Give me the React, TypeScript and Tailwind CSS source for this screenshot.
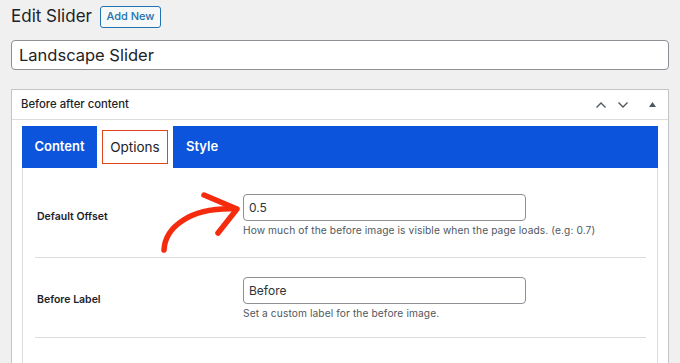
import React from 'react';

const font = { fontFamily: 'Inter, "Open Sans", sans-serif' };

function Row({
  label,
  value,
  help,
  first = false,
}: {
  label: string;
  value: string;
  help: string;
  first?: boolean;
}) {
  return (
    <div
      className={`flex items-center border-b border-[#dcdcde] ${first ? 'pt-[26px] pb-[20px]' : 'pt-[19px] pb-[17px]'}`}
    >
      <div className="w-[208px] shrink-0 pl-[2px] pt-[3px] text-[10.5px] font-semibold text-[#1d2327]">
        {label}
      </div>
      <div className="flex flex-col">
        <div className="flex h-[27px] w-[283px] items-center rounded-[4px] border border-[#8c8f94] px-[5px] text-[12px] text-[#2c3338]">
          {value}
        </div>
        <div className="mt-[2px] text-[10.2px] leading-[14px] tracking-[0.1px] text-[#50575e]">{help}</div>
      </div>
    </div>
  );
}

export default function App() {
  return (
    <div className="h-[363px] overflow-hidden bg-[#f0f0f1] px-[11px] pt-[5px]" style={font}>
      <div className="flex h-[23px] items-center gap-[8px]">
        <h1 className="text-[17px] leading-none text-[#1d2327]">Edit Slider</h1>
        <button
          type="button"
          className="flex h-[22px] w-[61px] items-center justify-center rounded-[3px] border border-[#2271b1] bg-[#f6f7f7] text-[11px] font-medium text-[#2271b1]"
        >
          Add New
        </button>
      </div>

      <div className="mt-[12px] flex h-[30px] items-center rounded-[4px] border border-[#8c8f94] bg-white px-[7px] text-[16.5px] text-[#1d2327]">
        Landscape Slider
      </div>

      <div className="mt-[19px] border border-[#c3c4c7] bg-white">
        <div className="flex h-[30px] items-center justify-between border-b border-[#dcdcde] pl-[9px] pr-[12px]">
          <span className="text-[11.3px] font-medium text-[#1d2327]">Before after content</span>
          <div className="flex items-center gap-[10px] text-[#50575e]">
            <svg width="12" height="8" viewBox="0 0 12 8" fill="none" stroke="currentColor" strokeWidth="1.4">
              <path d="M1.5 6.5 6 2l4.5 4.5" />
            </svg>
            <svg width="12" height="8" viewBox="0 0 12 8" fill="none" stroke="currentColor" strokeWidth="1.4">
              <path d="M1.5 1.5 6 6l4.5-4.5" />
            </svg>
            <svg className="ml-[10px]" width="7" height="5" viewBox="0 0 7 5" fill="currentColor">
              <path d="M3.5 0 7 5H0z" />
            </svg>
          </div>
        </div>

        <div className="px-[10px] pt-[6px]">
          <div className="flex h-[42px] bg-[#0b54db] text-[13px] font-semibold">
            <div className="flex w-[75px] items-center justify-center text-white">Content</div>
            <div className="flex w-[76px] items-center justify-center bg-white">
              <div className="flex h-[34px] w-[66px] items-center justify-center border-[1.5px] border-[#e0441f] text-[13.5px] font-normal text-[#1d2327]">
                Options
              </div>
            </div>
            <div className="flex items-center pl-[13px] text-white">Style</div>
          </div>

          <div className="relative h-[200px] border-x border-[#dcdcde] pl-[12px] pr-[11px]">
            <Row
              first
              label="Default Offset"
              value="0.5"
              help="How much of the before image is visible when the page loads. (e.g: 0.7)"
            />
            <Row label="Before Label" value="Before" help="Set a custom label for the before image." />

            <svg
              className="pointer-events-none absolute left-[134px] top-[22px]"
              width="90"
              height="70"
              viewBox="0 0 90 70"
              fill="none"
              stroke="#f52b0e"
              strokeWidth="5.5"
              strokeLinecap="round"
              strokeLinejoin="round"
            >
              <path d="M7 60 C 8 38, 32 17, 79 19" />
              <path d="M47 5 L 80 19 L 61 43" />
            </svg>
          </div>
        </div>
      </div>
    </div>
  );
}
